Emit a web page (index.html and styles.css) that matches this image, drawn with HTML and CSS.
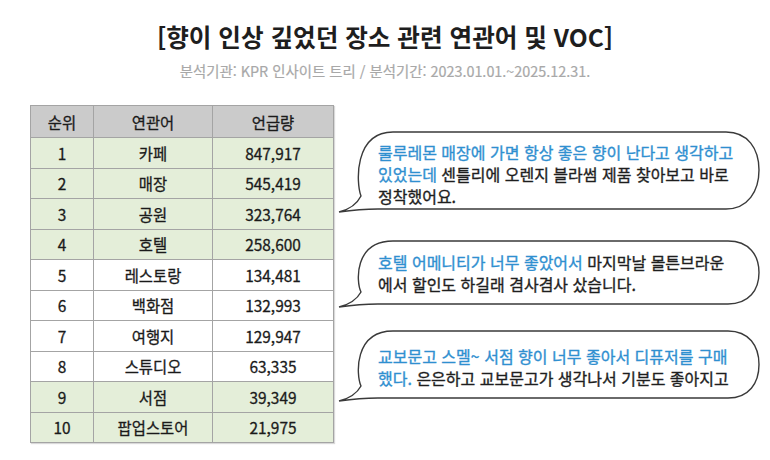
FILE: index.html
```html
<!DOCTYPE html>
<html lang="ko">
<head>
<meta charset="utf-8">
<link rel="stylesheet" href="styles.css">
</head>
<body>
<header class="head">
  <h1 class="title">[향이 인상 깊었던 장소 관련 연관어 및 VOC]</h1>
  <p class="sub">분석기관: KPR 인사이트 트리 / 분석기간: 2023.01.01.~2025.12.31.</p>
</header>
<main class="main">
  <table class="rank">
    <colgroup><col class="c1"><col class="c2"><col class="c3"></colgroup>
    <thead><tr><th>순위</th><th>연관어</th><th>언급량</th></tr></thead>
    <tbody>
      <tr class="g"><td>1</td><td>카페</td><td>847,917</td></tr>
      <tr class="g"><td>2</td><td>매장</td><td>545,419</td></tr>
      <tr class="g"><td>3</td><td>공원</td><td>323,764</td></tr>
      <tr class="g"><td>4</td><td>호텔</td><td>258,600</td></tr>
      <tr><td>5</td><td>레스토랑</td><td>134,481</td></tr>
      <tr><td>6</td><td>백화점</td><td>132,993</td></tr>
      <tr><td>7</td><td>여행지</td><td>129,947</td></tr>
      <tr><td>8</td><td>스튜디오</td><td>63,335</td></tr>
      <tr class="g"><td>9</td><td>서점</td><td>39,349</td></tr>
      <tr class="g"><td>10</td><td>팝업스토어</td><td>21,975</td></tr>
    </tbody>
  </table>
  <section class="bubbles">
    <div class="bubble b1">
      <svg class="shape" viewBox="0 0 423 82" width="423" height="82"><path d="M 55 1 H 388 C 410 1 421 18 421 39 C 421 60 410 78 388 78 H 40 Q 22 78 1 81 Q 17 77 23 65 C 18 52 16 1 55 1 Z"/></svg>
      <p class="txt"><span class="hl">룰루레몬 매장에 가면 항상 좋은 향이 난다고 생각하고</span><br><span class="hl">있었는데</span> 센틀리에 오렌지 블라썸 제품 찾아보고 바로<br>정착했어요.</p>
    </div>
    <div class="bubble b2">
      <svg class="shape" viewBox="0 0 423 69" width="423" height="69"><path d="M 55 1 H 390 C 411 1 421 15 421 32.5 C 421 50 411 64 390 64 H 40 Q 22 64 1 67 Q 17 63 23 52 C 18 42 16 1 55 1 Z"/></svg>
      <p class="txt"><span class="hl">호텔 어메니티가 너무 좋았어서</span> 마지막날 몰튼브라운<br>에서 할인도 하길래 겸사겸사 샀습니다.</p>
    </div>
    <div class="bubble b3">
      <svg class="shape" viewBox="0 0 423 73" width="423" height="73"><path d="M 55 1 H 390 C 411 1 421 16 421 34.5 C 421 53 411 68 390 68 H 40 Q 22 68 1 71 Q 17 67 23 56 C 18 45 16 1 55 1 Z"/></svg>
      <p class="txt"><span class="hl">교보문고 스멜~ 서점 향이 너무 좋아서 디퓨저를 구매</span><br><span class="hl">했다.</span> 은은하고 교보문고가 생각나서 기분도 좋아지고</p>
    </div>
  </section>
</main>
</body>
</html>
```
FILE: styles.css
```css
* { box-sizing: border-box; }
html, body { margin: 0; padding: 0; background: #fff; }
body {
  width: 770px;
  height: 460px;
  overflow: hidden;
  font-family: "Noto Sans CJK KR", "Noto Sans", sans-serif;
  color: #222;
}
.head { text-align: center; padding-top: 21px; }
.title {
  margin: 0;
  font-size: 24.6px;
  line-height: 30px;
  font-weight: 700;
  color: #1e1e1e;
}
.sub {
  margin: 10px 0 0;
  font-size: 14.4px;
  line-height: 20px;
  color: #a8a8a8;
  -webkit-text-stroke: 0.2px #a8a8a8;
}
.main {
  display: flex;
  align-items: flex-start;
  padding-left: 30px;
  margin-top: 24px;
}
.rank {
  border-collapse: collapse;
  width: 303px;
  table-layout: fixed;
  font-size: 15.4px;
  color: #1a1a1a;
  -webkit-text-stroke: 0.3px #1a1a1a;
  box-shadow: 1px 1px 1px rgba(0,0,0,0.15);
}
.c1 { width: 63px; }
.c2 { width: 119px; }
.c3 { width: 121px; }
.rank th, .rank td {
  border: 1px solid #a4a4a4;
  text-align: center;
  padding: 0;
  line-height: 20px;
}
.rank th {
  height: 32px;
  background: #cbcbcb;
  font-weight: 400;
}
.rank td { height: 30.5px; background: #fff; }
.rank tr.g td { background: #e4eed9; }
.bubbles {
  display: flex;
  flex-direction: column;
  margin-left: 4px;
  margin-top: 26px;
}
.bubble { position: relative; width: 423px; }
.b1 { height: 82px; }
.b2 { height: 69px; margin-top: 27px; }
.b3 { height: 73px; margin-top: 21px; }
.shape { position: absolute; left: 0; top: 0; }
.shape path { fill: #fff; stroke: #3a3a3a; stroke-width: 1.4; }
.txt {
  position: relative;
  margin: 0;
  padding-left: 40px;
  font-size: 16px;
  line-height: 22px;
  white-space: nowrap;
  color: #1e1e1e;
  -webkit-text-stroke: 0.35px #1e1e1e;
}
.b1 .txt { padding-top: 10px; }
.b2 .txt { padding-top: 11px; }
.b3 .txt { padding-top: 15px; }
.hl { color: #2f8fd0; -webkit-text-stroke: 0.35px #2f8fd0; }
```
